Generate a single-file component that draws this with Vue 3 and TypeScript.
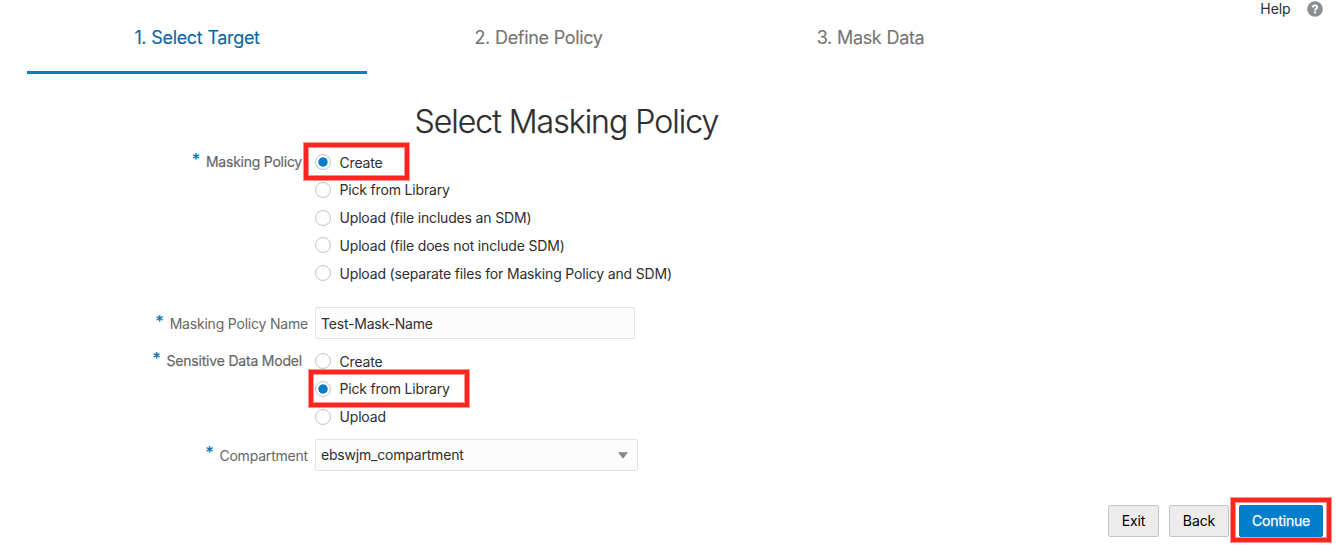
<script setup lang="ts">
import { ref } from 'vue'

interface Step { label: string; cls: string }
interface Option { value: string; label: string; cls: string }

const steps: Step[] = [
  { label: '1. Select Target', cls: 'step-target' },
  { label: '2. Define Policy', cls: 'step-define' },
  { label: '3. Mask Data', cls: 'step-mask' },
]
const activeStep = ref(0)

const policyOptions: Option[] = [
  { value: 'create', label: 'Create', cls: 'low' },
  { value: 'library', label: 'Pick from Library', cls: '' },
  { value: 'upload-sdm', label: 'Upload (file includes an SDM)', cls: '' },
  { value: 'upload', label: 'Upload (file does not include SDM)', cls: '' },
  { value: 'upload-both', label: 'Upload (separate files for Masking Policy and SDM)', cls: '' },
]
const modelOptions: Option[] = [
  { value: 'create', label: 'Create', cls: 'low' },
  { value: 'library', label: 'Pick from Library', cls: '' },
  { value: 'upload', label: 'Upload', cls: '' },
]

const policy = ref('create')
const model = ref('library')
const policyName = ref('Test-Mask-Name')
</script>

<template>
  <div class="page">
    <header class="top">
      <nav class="steps">
        <div
          v-for="(s, i) in steps"
          :key="s.label"
          class="step"
          :class="[s.cls, { active: i === activeStep }]"
          @click="activeStep = i"
        ><span>{{ s.label }}</span></div>
      </nav>
      <div class="help">
        <span class="help-text">Help</span>
        <svg width="16" height="16" viewBox="0 0 16 16">
          <circle cx="8" cy="8" r="7.8" fill="#8b8f92" />
          <path d="M5.8 6.4C5.8 5 6.7 4.4 8 4.4s2.2.7 2.2 1.8c0 1.5-2.1 1.4-2.1 3.2" fill="none" stroke="#fff" stroke-width="1.9" />
          <rect x="7.1" y="10.4" width="2" height="1.9" fill="#fff" />
        </svg>
      </div>
    </header>

    <h1 class="title">Select Masking Policy</h1>

    <form class="form" @submit.prevent>
      <div class="row row-policy">
        <div class="label group"><i>*</i><span>Masking Policy</span></div>
        <div class="options">
          <label v-for="o in policyOptions" :key="o.value" class="option" :class="o.cls">
            <input v-model="policy" type="radio" name="policy" :value="o.value" />
            <span>{{ o.label }}</span>
          </label>
          <div class="mark mark-policy"></div>
        </div>
      </div>

      <div class="row row-name">
        <div class="label"><i>*</i><span>Masking Policy Name</span></div>
        <input v-model="policyName" class="field" type="text" />
      </div>

      <div class="row row-model">
        <div class="label group"><i>*</i><span>Sensitive Data Model</span></div>
        <div class="options">
          <label v-for="o in modelOptions" :key="o.value" class="option" :class="o.cls">
            <input v-model="model" type="radio" name="model" :value="o.value" />
            <span>{{ o.label }}</span>
          </label>
          <div class="mark mark-model"></div>
        </div>
      </div>

      <div class="row row-comp">
        <div class="label"><i>*</i><span>Compartment</span></div>
        <div class="field select">
          <span>ebswjm_compartment</span>
          <svg width="10" height="7" viewBox="0 0 10 7"><path d="M0 .3h10L5 6.7z" fill="#85898c" /></svg>
        </div>
      </div>
    </form>

    <footer class="actions">
      <button class="btn exit" type="button">Exit</button>
      <button class="btn back" type="button">Back</button>
      <div class="primary-wrap">
        <button class="btn primary" type="button">Continue</button>
        <div class="mark mark-continue"></div>
      </div>
    </footer>
  </div>
</template>

<style>
body { margin: 0; background: #fff; }
</style>

<style scoped>
.page {
  box-sizing: border-box;
  width: 1336px;
  height: 559px;
  overflow: hidden;
  font-family: Inter, "Liberation Sans", sans-serif;
  font-size: 14px;
  letter-spacing: -0.17px;
  color: #2e2e2e;
  background: #fff;
}
.top { display: flex; justify-content: space-between; height: 74px; padding-left: 27px; }
.steps { display: flex; }
.step {
  box-sizing: border-box;
  height: 74px;
  border-bottom: 3px solid transparent;
  display: flex;
  justify-content: center;
  font-size: 18px;
  line-height: 22px;
  padding-top: 27px;
  color: #757575;
  letter-spacing: -0.35px;
  word-spacing: 0.4px;
  -webkit-text-stroke: 0.12px currentColor;
  white-space: nowrap;
}
.step-target { width: 340px; }
.step-define { width: 343px; }
.step-mask { width: 321px; }
.step.active { color: #0a66a3; border-bottom-color: #007dcb; }
.help { display: flex; align-items: center; gap: 16.5px; height: 18px; padding-right: 13px; }
.help-text { height: 18px; line-height: 17px; letter-spacing: -0.1px; }

.title {
  margin: 28px 0 0;
  padding-left: 414.5px;
  height: 40px;
  font-size: 32px;
  line-height: 40px;
  font-weight: 300;
  letter-spacing: -0.99px;
  -webkit-text-stroke: 0.25px currentColor;
  white-space: nowrap;
}

.form { display: flex; flex-direction: column; margin-top: 6px; }
.row { display: grid; grid-template-columns: 308px 323px; column-gap: 7px; }
.row-policy { height: 159px; }
.row-name { height: 40px; }
.row-model { height: 92px; }
.row-comp { height: 32px; }
.label {
  display: flex;
  justify-content: flex-end;
  height: 34px;
  line-height: 34px;
  color: #666;
  letter-spacing: -0.2px;
  white-space: nowrap;
}
.label i {
  font-style: normal;
  font-size: 16px;
  line-height: 29px;
  margin-right: 6px;
  color: #0a6fb0;
  letter-spacing: 0;
  -webkit-text-stroke: 0.2px currentColor;
}
.label.group { padding-right: 6px; height: 28px; line-height: 28px; -webkit-text-stroke: 0.18px currentColor; }
.row-policy .label { letter-spacing: -0.24px; }
.label.group i { line-height: 22px; }
.row-comp .label i { line-height: 26px; }
.options { position: relative; display: flex; flex-direction: column; }
.option { display: flex; align-items: center; height: 27.85px; white-space: nowrap; }
.option.low span { padding-top: 2px; }
.option input {
  flex: none;
  appearance: none;
  box-sizing: border-box;
  width: 16px;
  height: 16px;
  margin: 0 8.5px 0 0;
  border: 1px solid #c4c4c4;
  border-radius: 50%;
  background: #fff;
}
.option input:checked { background: radial-gradient(circle, #0a7cc8 4.3px, #fff 5px); }
.field {
  box-sizing: border-box;
  width: 320px;
  height: 32px;
  border: 1px solid #dfe4e7;
  border-radius: 2px;
  background: #fcfcfc;
  padding: 0 5px;
  font: inherit;
  letter-spacing: -0.2px;
  color: #2e2e2e;
  outline: none;
}
.select { display: flex; align-items: center; justify-content: space-between; width: 323px; padding: 0 9px 0 5px; }
.select span { height: 18px; line-height: 18px; }

.actions { display: flex; justify-content: flex-end; gap: 10px; margin-top: 34px; padding-right: 13px; }
.btn {
  box-sizing: border-box;
  height: 32px;
  padding: 0 0 2px;
  border: 1px solid #c4c4c4;
  border-radius: 2px;
  background: #ececec;
  color: #000;
  font: inherit;
  letter-spacing: -0.1px;
}
.exit { width: 51px; }
.back { width: 60px; }
.primary { width: 84px; border-color: #007dcb; background: #007dcb; color: #fff; letter-spacing: -0.17px; -webkit-text-stroke: 0.25px #fff; }
.primary-wrap { position: relative; }

.mark {
  position: absolute;
  box-sizing: border-box;
  border: 4px solid #ff251f;
  box-shadow: 0 0 0 1px rgba(255, 37, 31, 0.5), inset 0 0 0 1px rgba(255, 37, 31, 0.5);
  pointer-events: none;
}
.mark-policy { left: -11px; top: -5px; width: 105px; height: 37px; }
.mark-model { left: -6px; top: 23px; width: 160px; height: 37px; }
.mark-continue { left: -8px; top: -7px; width: 100px; height: 44px; }
</style>
